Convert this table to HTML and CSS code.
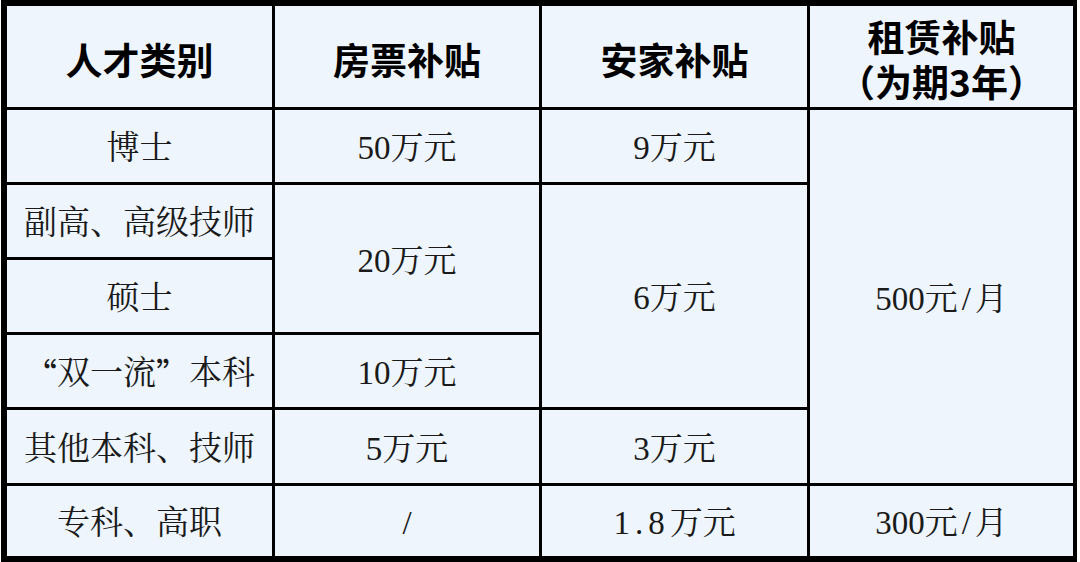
FILE: index.html
```html
<!DOCTYPE html>
<html lang="zh-CN">
<head>
<meta charset="utf-8">
<title>人才补贴</title>
<link rel="stylesheet" href="styles.css">
</head>
<body>
<div class="table">
  <div class="cell head">人才类别</div>
  <div class="cell head">房票补贴</div>
  <div class="cell head">安家补贴</div>
  <div class="cell head two"><span class="line">租赁补贴</span><span class="line">（为期3年）</span></div>

  <div class="cell">博士</div>
  <div class="cell">50万元</div>
  <div class="cell">9万元</div>
  <div class="cell rent">500元<span class="slash">/</span>月</div>

  <div class="cell">副高、高级技师</div>
  <div class="cell house20">20万元</div>
  <div class="cell settle6">6万元</div>

  <div class="cell">硕士</div>

  <div class="cell"><span class="quote">“</span>双一流<span class="quote">”</span>本科</div>
  <div class="cell">10万元</div>

  <div class="cell">其他本科、技师</div>
  <div class="cell">5万元</div>
  <div class="cell">3万元</div>

  <div class="cell">专科、高职</div>
  <div class="cell">/</div>
  <div class="cell"><span class="num">1.8</span>万元</div>
  <div class="cell">300元<span class="slash">/</span>月</div>
</div>
</body>
</html>
```

FILE: styles.css
```css
html, body {
  margin: 0;
  padding: 0;
  background: #ffffff;
}

body {
  padding-left: 1px;
}

.table {
  display: grid;
  width: 1076px;
  box-sizing: border-box;
  grid-template-columns: 265px 264px 265px 263px;
  grid-template-rows: 101px 72px 72px 72px 72px 73px 70px;
  gap: 3px;
  padding: 6px 4px 6px 6px;
  background: #000000;
}

.cell {
  background: #eef5fc;
  display: flex;
  align-items: center;
  justify-content: center;
  text-align: center;
  font-family: "Liberation Serif", "Noto Serif CJK SC", "Noto Sans CJK SC", serif;
  font-size: 33px;
  color: #1a1a1a;
  line-height: 1.2;
  padding-top: 6px;
  box-sizing: border-box;
}

.head {
  font-family: "Noto Sans CJK SC", sans-serif;
  font-weight: 700;
  font-size: 37px;
  color: #000000;
  padding-top: 6px;
}

.head.two {
  flex-direction: column;
  line-height: 1;
  gap: 7px;
  padding-top: 4px;
}

.line {
  display: block;
  height: 38px;
  line-height: 38px;
}

.rent {
  grid-column: 4;
  grid-row: 2 / span 5;
}

.house20 {
  grid-column: 2;
  grid-row: 3 / span 2;
}

.settle6 {
  grid-column: 3;
  grid-row: 3 / span 3;
}

.num {
  letter-spacing: 5px;
}

.slash {
  padding: 0 4px;
}

.quote {
  font-family: "Noto Sans CJK SC", sans-serif;
  display: inline-block;
  width: 33px;
}

.quote:first-child {
  text-align: right;
}

.quote + .quote,
.quote:last-of-type {
  text-align: left;
}
```
